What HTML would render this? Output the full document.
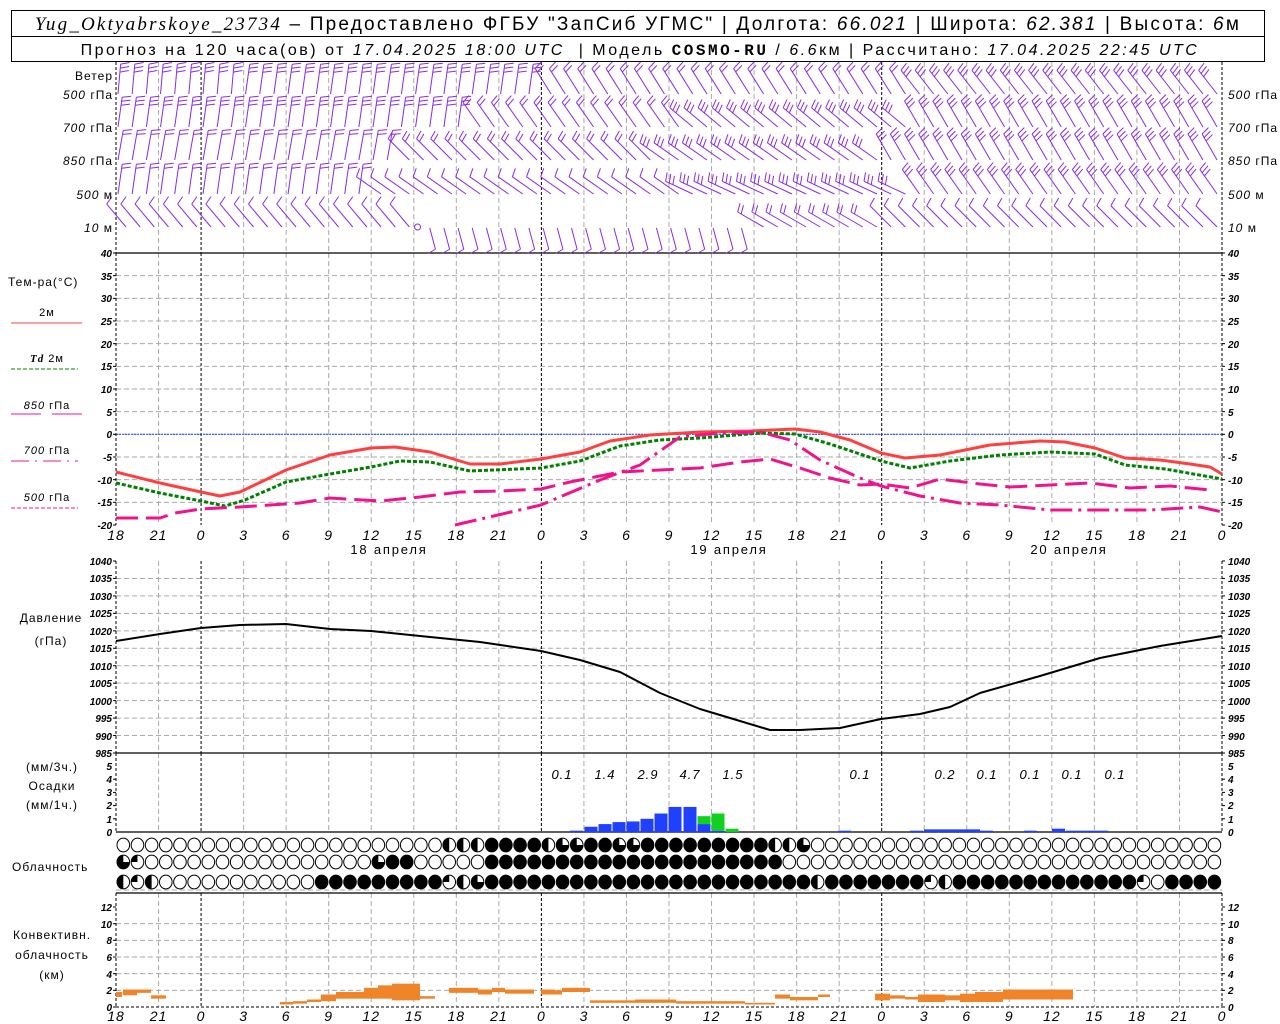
<!DOCTYPE html>
<html><head><meta charset="utf-8">
<style>
html,body{margin:0;padding:0;background:#fff;}
svg{display:block;}
text{font-family:"Liberation Sans","DejaVu Sans",sans-serif;fill:#000;}
.it{font-style:italic;}
.tk{font-size:10px;font-style:italic;font-weight:bold;}
.ax{font-size:14px;font-style:italic;letter-spacing:1px;}
.lb{font-size:12px;}
</style></head><body>
<svg id="s" width="1280" height="1024" viewBox="0 0 1280 1024" xmlns="http://www.w3.org/2000/svg">
<rect x="0" y="0" width="1280" height="1024" fill="#fff"/>
<g id="grid"></g>
<g id="plots"></g>
<!-- header -->
<rect x="11.5" y="10.5" width="1253" height="51" fill="none" stroke="#000"/>
<line x1="11" y1="36.5" x2="1265" y2="36.5" stroke="#000"/>
<text x="638" y="30" text-anchor="middle" font-size="19" letter-spacing="2.2" xml:space="preserve"><tspan class="it" font-family="Liberation Serif">Yug_Oktyabrskoye_23734</tspan> – Предоставлено ФГБУ "ЗапСиб УГМС" | Долгота: <tspan class="it">66.021</tspan> | Широта: <tspan class="it">62.381</tspan> | Высота: <tspan class="it">6</tspan>м</text>
<text x="640" y="55" text-anchor="middle" font-size="16" letter-spacing="2.5" xml:space="preserve">Прогноз на 120 часа(ов) от <tspan class="it">17.04.2025 18:00 UTC</tspan>  | Модель <tspan font-family="Liberation Mono" font-weight="bold">COSMO-RU</tspan> / <tspan class="it">6.6</tspan>км | Рассчитано: <tspan class="it">17.04.2025 22:45 UTC</tspan></text>

<!-- wind labels -->
<g class="lb" font-size="11" letter-spacing="1">
<text x="113" y="80" text-anchor="end">Ветер</text>
<text x="113" y="99" text-anchor="end"><tspan class="it">500</tspan> гПа</text>
<text x="113" y="132" text-anchor="end"><tspan class="it">700</tspan> гПа</text>
<text x="113" y="165" text-anchor="end"><tspan class="it">850</tspan> гПа</text>
<text x="113" y="199" text-anchor="end"><tspan class="it">500</tspan> м</text>
<text x="113" y="232" text-anchor="end"><tspan class="it">10</tspan>   м</text>
<text x="1228" y="99"><tspan class="it">500</tspan> гПа</text>
<text x="1228" y="132"><tspan class="it">700</tspan> гПа</text>
<text x="1228" y="165"><tspan class="it">850</tspan> гПа</text>
<text x="1228" y="199"><tspan class="it">500</tspan> м</text>
<text x="1228" y="232"><tspan class="it">10</tspan>   м</text>
</g>

<!-- temp legend -->
<g font-size="12" letter-spacing="1">
<text x="8" y="286">Тем-ра(°C)</text>
<text x="47" y="316" text-anchor="middle" font-size="11">2м</text>
<line x1="11" y1="323" x2="82" y2="323" stroke="#ff4040"/>
<text x="47" y="362" text-anchor="middle" font-size="11"><tspan class="it" font-weight="bold" font-family="Liberation Serif">Td</tspan>  2м</text>
<line x1="11" y1="369" x2="78" y2="369" stroke="#008000" stroke-dasharray="4,2"/>
<text x="47" y="409" text-anchor="middle" font-size="11"><tspan class="it">850</tspan> гПа</text>
<line x1="11" y1="414" x2="41" y2="414" stroke="#f0148c"/><line x1="52" y1="414" x2="82" y2="414" stroke="#f0148c"/>
<text x="47" y="454" text-anchor="middle" font-size="11"><tspan class="it">700</tspan> гПа</text>
<line x1="11" y1="461" x2="78" y2="461" stroke="#f0148c" stroke-dasharray="18,6,2,6"/>
<text x="47" y="501" text-anchor="middle" font-size="11"><tspan class="it">500</tspan> гПа</text>
<line x1="11" y1="508" x2="78" y2="508" stroke="#f0148c" stroke-dasharray="4,2"/>
</g>

<!-- temp ticks -->
<g class="tk" text-anchor="end">
<text x="112" y="257">40</text><text x="112" y="280">35</text><text x="112" y="302">30</text><text x="112" y="325">25</text><text x="112" y="348">20</text><text x="112" y="370">15</text><text x="112" y="393">10</text><text x="112" y="416">5</text><text x="112" y="438">0</text><text x="112" y="461">-5</text><text x="112" y="484">-10</text><text x="112" y="506">-15</text><text x="112" y="529">-20</text>
</g>
<g class="tk">
<text x="1228" y="257">40</text><text x="1228" y="280">35</text><text x="1228" y="302">30</text><text x="1228" y="325">25</text><text x="1228" y="348">20</text><text x="1228" y="370">15</text><text x="1228" y="393">10</text><text x="1228" y="416">5</text><text x="1228" y="438">0</text><text x="1228" y="461">-5</text><text x="1228" y="484">-10</text><text x="1228" y="506">-15</text><text x="1228" y="529">-20</text>
</g>
<!-- temp x labels -->
<g class="ax" text-anchor="middle">
<text x="116" y="540">18</text><text x="158.5" y="540">21</text><text x="201" y="540">0</text><text x="243.6" y="540">3</text><text x="286.2" y="540">6</text><text x="328.7" y="540">9</text><text x="371.2" y="540">12</text><text x="413.8" y="540">15</text><text x="456.3" y="540">18</text><text x="498.9" y="540">21</text><text x="541.4" y="540">0</text><text x="584" y="540">3</text><text x="626.5" y="540">6</text><text x="669" y="540">9</text><text x="711.6" y="540">12</text><text x="754.1" y="540">15</text><text x="796.6" y="540">18</text><text x="839.2" y="540">21</text><text x="881.7" y="540">0</text><text x="924.3" y="540">3</text><text x="966.8" y="540">6</text><text x="1009.3" y="540">9</text><text x="1051.9" y="540">12</text><text x="1094.4" y="540">15</text><text x="1137" y="540">18</text><text x="1179.5" y="540">21</text><text x="1222" y="540">0</text>
</g>
<g font-size="13" text-anchor="middle" letter-spacing="1.8">
<text x="389" y="554">18 апреля</text><text x="729" y="554">19 апреля</text><text x="1069" y="554">20 апреля</text>
</g>

<!-- pressure -->
<g font-size="12" text-anchor="middle" letter-spacing="1"><text x="51" y="622">Давление</text><text x="51" y="645">(гПа)</text></g>
<g class="tk" text-anchor="end">
<text x="112" y="565">1040</text><text x="112" y="582">1035</text><text x="112" y="600">1030</text><text x="112" y="617">1025</text><text x="112" y="635">1020</text><text x="112" y="652">1015</text><text x="112" y="670">1010</text><text x="112" y="687">1005</text><text x="112" y="705">1000</text><text x="112" y="722">995</text><text x="112" y="740">990</text><text x="112" y="757">985</text>
</g>
<g class="tk">
<text x="1228" y="565">1040</text><text x="1228" y="582">1035</text><text x="1228" y="600">1030</text><text x="1228" y="617">1025</text><text x="1228" y="635">1020</text><text x="1228" y="652">1015</text><text x="1228" y="670">1010</text><text x="1228" y="687">1005</text><text x="1228" y="705">1000</text><text x="1228" y="722">995</text><text x="1228" y="740">990</text><text x="1228" y="757">985</text>
</g>

<!-- precip -->
<g font-size="12" text-anchor="middle" letter-spacing="1"><text x="52" y="771">(мм/3ч.)</text><text x="52" y="790">Осадки</text><text x="52" y="809">(мм/1ч.)</text></g>
<g class="tk" text-anchor="end">
<text x="112" y="770">5</text><text x="112" y="783">4</text><text x="112" y="796">3</text><text x="112" y="809">2</text><text x="112" y="823">1</text><text x="112" y="836">0</text>
</g>
<g class="tk">
<text x="1228" y="770">5</text><text x="1228" y="783">4</text><text x="1228" y="796">3</text><text x="1228" y="809">2</text><text x="1228" y="823">1</text><text x="1228" y="836">0</text>
</g>
<g class="it" font-size="13" text-anchor="middle" letter-spacing="1">
<text x="562" y="779">0.1</text><text x="605" y="779">1.4</text><text x="648" y="779">2.9</text><text x="690" y="779">4.7</text><text x="733" y="779">1.5</text><text x="860" y="779">0.1</text><text x="945" y="779">0.2</text><text x="987" y="779">0.1</text><text x="1030" y="779">0.1</text><text x="1072" y="779">0.1</text><text x="1115" y="779">0.1</text>
</g>

<text x="12" y="871" font-size="12" letter-spacing="1">Облачность</text>

<!-- convective -->
<g font-size="12" text-anchor="middle" letter-spacing="1"><text x="52" y="939">Конвективн.</text><text x="52" y="959">облачность</text><text x="52" y="979">(км)</text></g>
<g class="tk" text-anchor="end">
<text x="112" y="911">12</text><text x="112" y="928">10</text><text x="112" y="944">8</text><text x="112" y="961">6</text><text x="112" y="978">4</text><text x="112" y="994">2</text><text x="112" y="1011">0</text>
</g>
<g class="tk">
<text x="1228" y="911">12</text><text x="1228" y="928">10</text><text x="1228" y="944">8</text><text x="1228" y="961">6</text><text x="1228" y="978">4</text><text x="1228" y="994">2</text><text x="1228" y="1011">0</text>
</g>
<g class="ax" text-anchor="middle">
<text x="116" y="1021">18</text><text x="158.5" y="1021">21</text><text x="201" y="1021">0</text><text x="243.6" y="1021">3</text><text x="286.2" y="1021">6</text><text x="328.7" y="1021">9</text><text x="371.2" y="1021">12</text><text x="413.8" y="1021">15</text><text x="456.3" y="1021">18</text><text x="498.9" y="1021">21</text><text x="541.4" y="1021">0</text><text x="584" y="1021">3</text><text x="626.5" y="1021">6</text><text x="669" y="1021">9</text><text x="711.6" y="1021">12</text><text x="754.1" y="1021">15</text><text x="796.6" y="1021">18</text><text x="839.2" y="1021">21</text><text x="881.7" y="1021">0</text><text x="924.3" y="1021">3</text><text x="966.8" y="1021">6</text><text x="1009.3" y="1021">9</text><text x="1051.9" y="1021">12</text><text x="1094.4" y="1021">15</text><text x="1137" y="1021">18</text><text x="1179.5" y="1021">21</text><text x="1222" y="1021">0</text>
</g>
</svg>
<script>
(function(){
var NS="http://www.w3.org/2000/svg";
var G=document.getElementById("grid"),P=document.getElementById("plots");
function el(p,t,a){var e=document.createElementNS(NS,t);for(var k in a)e.setAttribute(k,a[k]);p.appendChild(e);return e;}
function line(p,x1,y1,x2,y2,c,w,d){var a={x1:x1,y1:y1,x2:x2,y2:y2,stroke:c,"stroke-width":w||1};if(d)a["stroke-dasharray"]=d;return el(p,"line",a);}
var X0=116,X1=1222,STEP=(X1-X0)/26,HR=(X1-X0)/78;
function hgrid(y0,y1,n){for(var i=1;i<n;i++){var y=y0+(y1-y0)*i/n;line(G,X0,y,X1,y,"#aaa",1,"5,3");}}
hgrid(253,525,12);hgrid(561,753,11);hgrid(907,1007,6);
line(G,X0,890,X1,890,"#aaa",1,"5,3");
for(var i=1;i<5;i++){var y=832-i*13.2;line(G,X0-3,y,X0,y,"#000");line(G,X1,y,X1+3,y,"#000");}
var segs=[[62,253],[253,525],[561,753],[753,832],[893,1007]];
for(var k=0;k<=26;k++){var x=X0+k*STEP;var mid=(k%8==2);var edge=(k==0||k==26);
 segs.forEach(function(s){
  if(edge||mid) line(G,x,s[0],x,s[1],"#000",1,"3,2");
  else line(G,x,s[0],x,s[1],"#aaa",1,"5,3");
 });}
for(var i=0;i<=12;i++){var y=253+i*272/12;line(G,X0-3,y,X0,y,"#000");line(G,X1,y,X1+3,y,"#000");}
for(var i=0;i<=11;i++){var y=561+i*192/11;line(G,X0-3,y,X0,y,"#000");line(G,X1,y,X1+3,y,"#000");}
for(var i=0;i<=6;i++){var y=907+i*100/6;line(G,X0-3,y,X0,y,"#000");line(G,X1,y,X1+3,y,"#000");}
[253,753,832,893].forEach(function(y){line(G,X0,y,X1,y,"#000",1.3);});
line(G,X0,1007,X1,1007,"#000",1,"3,2");
line(G,X0,434.3,X1,434.3,"#2040ff",1,"2,1");
function pl(pts,c,w,d){var s=pts.map(function(p){return p.join(",")}).join(" ");var a={points:s,fill:"none",stroke:c,"stroke-width":w,"stroke-linejoin":"round"};if(d)a["stroke-dasharray"]=d;el(P,"polyline",a);}
pl([[116,472],[160,483],[201,492],[220,496],[240,492],[286,470],[330,455],[371,448],[395,447],[430,452],[470,464],[500,464],[541,459],[580,452],[610,441],[650,435],[700,432],[750,431],[795,429],[820,432],[850,440],[881,453],[905,458],[940,455],[990,445],[1040,441],[1065,442],[1095,448],[1125,458],[1160,460],[1190,464],[1210,467],[1222,474]],"#ff4040",3);
pl([[116,483],[160,493],[201,501],[225,506],[245,500],[286,482],[330,474],[371,467],[400,461],[430,462],[470,471],[541,468],[580,461],[620,446],[660,440],[700,438],[760,433],[795,434],[830,444],[881,461],[910,468],[950,461],[1000,455],[1050,452],[1095,454],[1125,465],[1165,469],[1222,479]],"#008000",3,"4,2");
pl([[116,518],[160,518],[175,513],[201,509],[240,507],[300,503],[330,498],[380,501],[420,497],[460,492],[500,491],[541,489],[570,482],[620,472],[660,470],[700,468],[740,462],[770,459],[800,468],[830,478],[860,485],[881,484],[910,488],[940,479],[980,484],[1010,487],[1050,485],[1090,483],[1130,488],[1170,486],[1210,490]],"#f0148c",3,"22,8");
pl([[455,525],[541,505],[600,480],[640,465],[680,437],[720,433],[760,432],[790,440],[820,460],[860,478],[881,486],[920,496],[960,503],[1000,505],[1050,510],[1100,510],[1150,510],[1200,507],[1222,512]],"#f0148c",3,"22,6,3,6");
pl([[116,641],[160,634],[201,628],[240,625],[286,624],[330,629],[371,631],[430,637],[480,642],[541,651],[580,660],[620,672],[660,693],[700,709],[740,721],[770,730],[800,730],[840,728],[881,719],[920,714],[950,707],[980,693],[1040,676],[1100,658],[1160,646],[1222,636]],"#000",2);
function bar(x,w,v0,v1,c){el(P,"rect",{x:x,y:832-v1*13.2,width:w,height:(v1-v0)*13.2,fill:c});}
var bl="#2040ff",gr="#10d020";
bar(570,13,0,0.1,bl);
[[584,0.4],[598,0.6],[612,0.75],[626,0.8],[640,1.0],[654,1.4],[668,1.9],[683,1.9]].forEach(function(b){bar(b[0]+0.5,13,0,b[1],bl);});
bar(697.5,13,0,0.6,bl);bar(697.5,13,0.6,1.2,gr);bar(711.5,13,0,0.1,bl);bar(711.5,13,0.1,1.4,gr);bar(725.5,13,0,0.25,gr);
bar(838,13,0,0.1,bl);bar(910,13,0,0.1,bl);bar(924,56,0,0.2,bl);bar(980,13,0,0.1,bl);bar(1024,13,0,0.1,bl);bar(1052,13,0,0.25,bl);bar(1066,42,0,0.1,bl);
var O="#f08428";
[[116,122,1.2,1.8],[123,137,1.4,2.1],[137,151,1.7,2.1],[151,166,1.0,1.4],[280,293,0.3,0.6],[293,307,0.4,0.7],[307,321,0.6,0.9],[321,336,0.7,1.5],[336,364,1.0,1.8],[364,378,1.0,2.3],[378,392,1.0,2.6],[392,420,0.8,2.8],[420,435,1.0,1.3],[449,462,1.7,2.3],[462,478,1.7,2.3],[478,492,1.5,2.1],[492,505,1.8,2.3],[505,534,1.6,2.1],[541,555,1.5,2.1],[555,562,1.5,2.0],[562,590,1.8,2.3],[590,635,0.5,0.8],[635,676,0.5,0.9],[676,745,0.4,0.7],[745,775,0.3,0.5],[775,790,1.0,1.5],[790,818,0.8,1.2],[818,830,1.2,1.5],[875,890,0.8,1.6],[890,905,1.0,1.4],[905,918,0.9,1.2],[918,945,0.6,1.5],[945,960,0.8,1.4],[960,975,0.6,1.6],[975,1003,0.6,1.8],[1003,1073,0.9,2.1]].forEach(function(b){el(P,"rect",{x:b[0],y:1007-b[3]*8.33,width:b[1]-b[0],height:(b[3]-b[2])*8.33,fill:O});});
var rows=[
 {y:845,s:"00000000000000000000000222444423344334444444442230000000000000000000000000000000"},
 {y:862,s:"31000000000000000034400000444444444444444444444000000000000000000000000000000000"},
 {y:882,s:"212000000000004444444441234444444444444444444444424444444124444444444444104444444210"}
];
function cloud(cx,cy,v){
 var r=6.3;
 el(P,"ellipse",{cx:cx,cy:cy,rx:r,ry:r+0.6,fill:v==4?"#000":"#fff",stroke:"#000","stroke-width":1});
 if(v==2){el(P,"path",{d:"M"+cx+","+(cy-r-0.6)+" A"+r+","+(r+0.6)+" 0 0 0 "+cx+","+(cy+r+0.6)+" Z",fill:"#000"});}
 if(v==3){el(P,"path",{d:"M"+cx+","+cy+" L"+cx+","+(cy-r-0.6)+" A"+r+","+(r+0.6)+" 0 1 0 "+(cx+r)+","+cy+" Z",fill:"#000"});}
 if(v==1){el(P,"path",{d:"M"+cx+","+cy+" L"+cx+","+(cy-r-0.6)+" A"+r+","+(r+0.6)+" 0 0 0 "+(cx-r)+","+cy+" Z",fill:"#000"});}
}
rows.forEach(function(r){for(var i=0;i<78;i++){var v=+r.s.charAt(i)||0;cloud(123.3+i*14.17,r.y,v);}});
var WC="#8a2be2";
function barb(x,y,th,n,L){L=L||30;var a=th*Math.PI/180;var dx=Math.sin(a),dy=-Math.cos(a);
 var tx=x+L*dx,ty=y+L*dy;line(P,x,y,tx,ty,WC,1);
 var fa=a+75*Math.PI/180;var fx=Math.sin(fa),fy=-Math.cos(fa);
 for(var k=0;k<n;k++){var bx=tx-dx*k*4,by=ty-dy*k*4;line(P,bx,by,bx+fx*9,by+fy*9,WC,1);}}
function th(i,a){for(var k=0;k<a.length;k++){if(i<a[k][0])return a[k];}return a[a.length-1];}
var W=[
 {y:94,d:[[9,5,3],[30,8,3],[56,-32,2],[78,-38,3]]},
 {y:127,d:[[25,8,3],[40,-35,2],[56,-50,3],[78,-30,3]]},
 {y:160,d:[[20,10,2],[38,-45,2],[54,-55,3],[78,-30,3]]},
 {y:194,d:[[18,8,2],[40,-55,1],[56,-65,3],[78,-35,3]]},
 {y:227,d:[[21,-40,1],[22,0,0],[45,165,1],[54,-60,2],[78,-45,1]]}
];
W.forEach(function(r){for(var i=0;i<78;i++){var p=th(i,r.d);var x=118+i*14.17;
 if(p[2]==0){el(P,"circle",{cx:x+2,cy:r.y,r:3,fill:"none",stroke:WC});continue;}
 if(p[1]>90){barb(x,r.y+1,p[1],p[2],22);}else barb(x+(p[1]<0?8:0),r.y,p[1],p[2]);}});
})();
</script>
</body></html>
